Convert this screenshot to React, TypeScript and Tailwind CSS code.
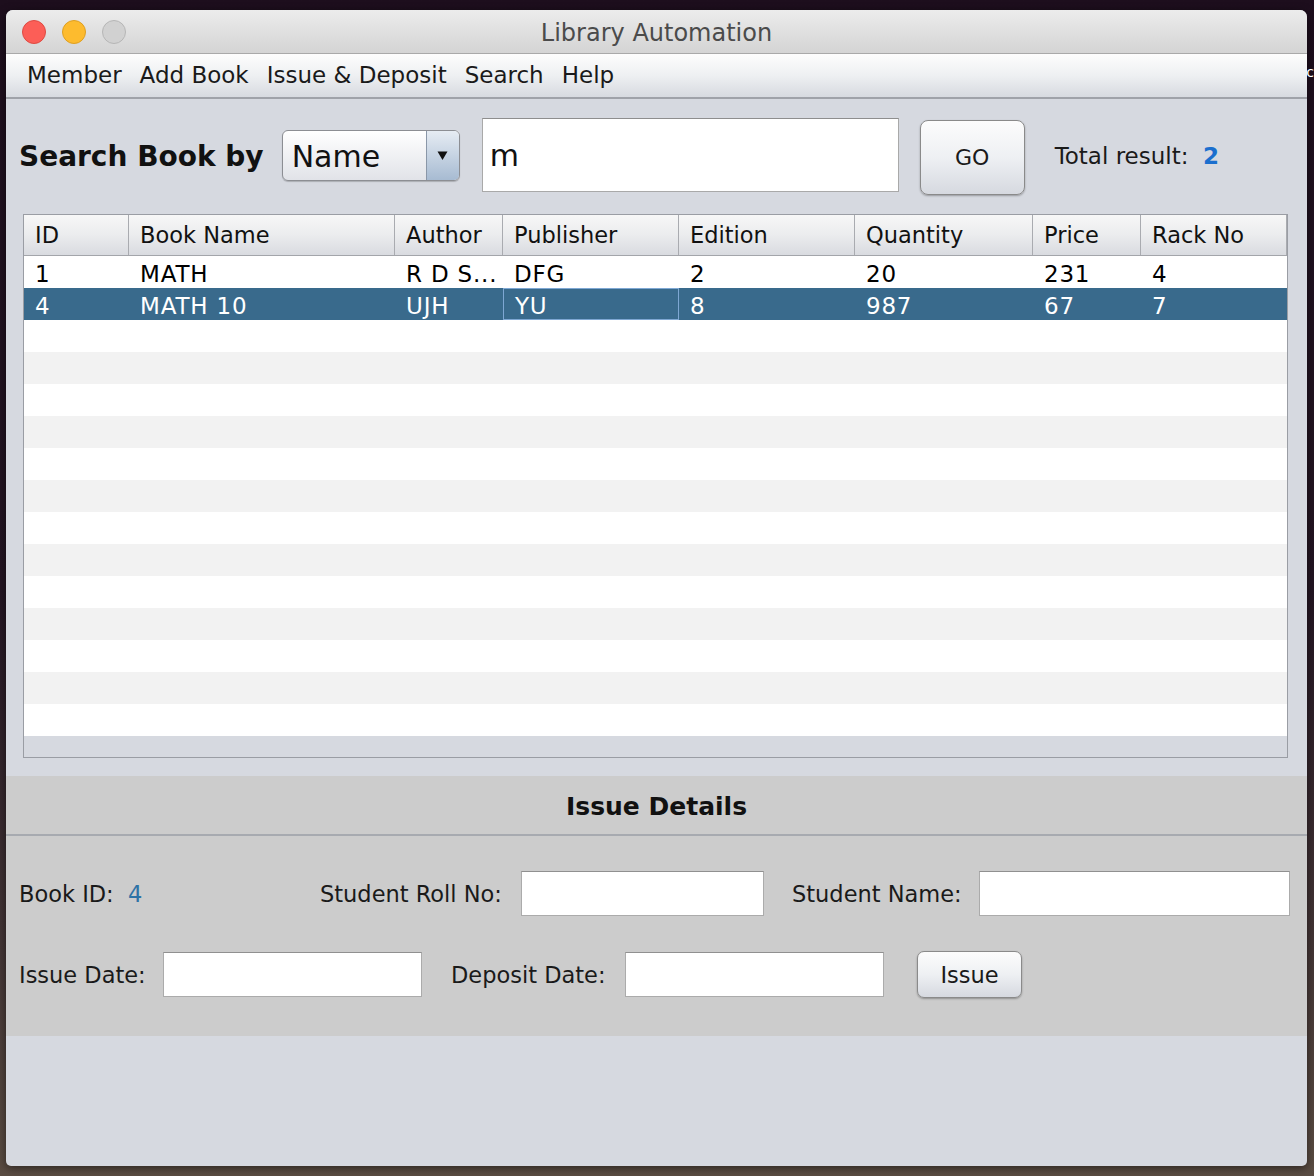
import React from "react";

const cols = ["ID", "Book Name", "Author", "Publisher", "Edition", "Quantity", "Price", "Rack No"];
const data: string[][] = [
  ["1", "MATH", "R D S...", "DFG", "2", "20", "231", "4"],
  ["4", "MATH 10", "UJH", "YU", "8", "987", "67", "7"],
];

function TableRow({ i }: { i: number }) {
  const row = data[i];
  const selected = i === 1;
  const bg = selected ? "bg-[#396a8c] text-white" : i % 2 === 1 ? "bg-[#f2f2f2] text-black" : "bg-white text-black";
  return (
    <div className={`grid grid-cols-[105px_266px_108px_176px_176px_178px_108px_146px] h-[32px] text-[23px] tracking-[0.8px] ${bg}`}>
      {cols.map((_, c) => (
        <div
          key={c}
          className={`h-[32px] pl-[11px] pt-[4px] flex items-center whitespace-nowrap overflow-hidden ${
            selected && c === 3 ? "border border-[#7ea7d3] pl-[10px]" : ""
          }`}
        >
          {row ? row[c] : ""}
        </div>
      ))}
    </div>
  );
}

export default function App() {
  return (
    <div className="w-[1314px] h-[1176px] bg-gradient-to-b from-[#1d0e1d] via-[#231522] to-[#5a4c42] pt-[10px] pl-[6px] font-['DejaVu_Sans',sans-serif] text-[22px] text-black overflow-hidden relative">
      <span className="absolute right-[0px] top-[62px] text-white text-[14px]">c</span>
      <div className="w-[1301px] h-[1156px] rounded-t-[7px] rounded-b-[5px] overflow-hidden bg-[#d6d9e0] flex flex-col shadow-[0_2px_8px_rgba(0,0,0,0.5)]">
        {/* Title bar */}
        <div className="h-[44px] shrink-0 bg-gradient-to-b from-[#ececec] to-[#d4d4d4] border-b border-[#a9a9a9] flex items-center relative">
          <div className="flex items-center gap-[16px] pl-[16px]">
            <div className="w-[24px] h-[24px] rounded-full bg-[#fc5e57] border border-[#de4a42]" />
            <div className="w-[24px] h-[24px] rounded-full bg-[#fdbb2e] border border-[#de9f22]" />
            <div className="w-[24px] h-[24px] rounded-full bg-[#d1d1d1] border border-[#b6b6b6]" />
          </div>
          <div className="absolute inset-0 flex items-center justify-center pt-[3px] text-[#4b4b4b] text-[24px]">
            Library Automation
          </div>
        </div>
        {/* Menu bar */}
        <div className="h-[45px] shrink-0 bg-gradient-to-b from-[#fdfdfd] via-[#eef0f2] to-[#d7dae0] border-b-2 border-[#9fa2a9] flex items-center pl-[21px] gap-[18px] text-[23px] text-[#1a1a1a]">
          <span>Member</span>
          <span>Add Book</span>
          <span>Issue &amp; Deposit</span>
          <span>Search</span>
          <span>Help</span>
        </div>
        {/* Search row */}
        <div className="flex items-center h-[76px] mt-[18px] shrink-0 pl-[13px]">
          <span className="font-bold text-[28px] pt-[3px] text-[#111]">Search Book by</span>
          <div className="ml-[18px] w-[178px] h-[51px] rounded-[6px] border border-[#8c8e93] bg-gradient-to-b from-white to-[#e1e3e8] flex overflow-hidden shadow-[0_1px_1px_rgba(0,0,0,0.2)]">
            <div className="flex-1 flex items-center pl-[9px] pt-[2px] text-[30px] text-[#111]">Name</div>
            <div className="w-[33px] border-l border-[#8a97a8] bg-gradient-to-b from-[#e6ecf3] to-[#a7bbd2] flex items-center justify-center">
              <svg width="11" height="11" viewBox="0 0 11 11">
                <polygon points="0.5,1.5 10.5,1.5 5.5,10" fill="#111" />
              </svg>
            </div>
          </div>
          <div className="ml-[22px] w-[417px] h-[74px] bg-white border border-[#a9a9a9] border-t-[#8e8e8e] flex items-center pl-[7px] text-[30px] text-[#111]">
            m
          </div>
          <div className="ml-[21px] mt-[4px] w-[105px] h-[75px] rounded-[8px] border border-[#8a8a8a] bg-gradient-to-b from-[#fcfcfc] via-[#eef0f3] to-[#d6d9e0] shadow-[0_1px_2px_rgba(0,0,0,0.3)] flex items-center justify-center text-[#1a1a1a]">
            GO
          </div>
          <div className="ml-[30px] mt-[3px] text-[23px] text-[#1a1a1a]">
            Total result:&nbsp; <span className="text-[#1b6fce] font-bold">2</span>
          </div>
        </div>
        {/* Table */}
        <div className="ml-[17px] mt-[21px] w-[1265px] h-[544px] shrink-0 border border-[#9a9da4] flex flex-col bg-[#d6d9e0]">
          <div className="grid grid-cols-[105px_266px_108px_176px_176px_178px_108px_146px] h-[41px] bg-gradient-to-b from-[#f7f7f7] via-[#ebecee] to-[#d9dbe0] border-b border-[#a3a5aa] text-[22.5px] text-[#111]">
            {cols.map((c) => (
              <div key={c} className="h-[40px] pl-[11px] pt-[1px] flex items-center border-r border-[#a9abb0] whitespace-nowrap">
                {c}
              </div>
            ))}
          </div>
          {Array.from({ length: 15 }).map((_, i) => (
            <TableRow key={i} i={i} />
          ))}
        </div>
        {/* Issue details */}
        <div className="mt-[18px] h-[260px] shrink-0 bg-[#cccccc] flex flex-col text-[22.5px]">
          <div className="h-[60px] flex items-center justify-center pt-[4px] font-bold text-[25px] text-[#111] border-b-2 border-[#a7aab0]">
            Issue Details
          </div>
          <div className="flex items-center mt-[35px] pl-[13px] text-[#1a1a1a]">
            <div className="w-[301px] pt-[3px]">
              Book ID:&nbsp; <span className="text-[#2e73a6]">4</span>
            </div>
            <div className="w-[201px] pt-[3px]">Student Roll No:</div>
            <div className="w-[243px] h-[45px] bg-white border border-[#ababab] border-t-[#909090]" />
            <div className="ml-[28px] w-[187px] pt-[3px]">Student Name:</div>
            <div className="w-[311px] h-[45px] bg-white border border-[#ababab] border-t-[#909090]" />
          </div>
          <div className="flex items-center mt-[35px] pl-[13px] text-[#1a1a1a]">
            <div className="w-[144px] pt-[3px]">Issue Date:</div>
            <div className="w-[259px] h-[45px] bg-white border border-[#ababab] border-t-[#909090]" />
            <div className="ml-[29px] w-[174px] pt-[3px]">Deposit Date:</div>
            <div className="w-[259px] h-[45px] bg-white border border-[#ababab] border-t-[#909090]" />
            <div className="ml-[33px] w-[105px] h-[47px] rounded-[7px] border border-[#8a8a8a] bg-gradient-to-b from-[#fcfcfc] via-[#eef0f3] to-[#d6d9e0] shadow-[0_1px_2px_rgba(0,0,0,0.3)] flex items-center justify-center pt-[2px]">
              Issue
            </div>
          </div>
        </div>
      </div>
    </div>
  );
}
